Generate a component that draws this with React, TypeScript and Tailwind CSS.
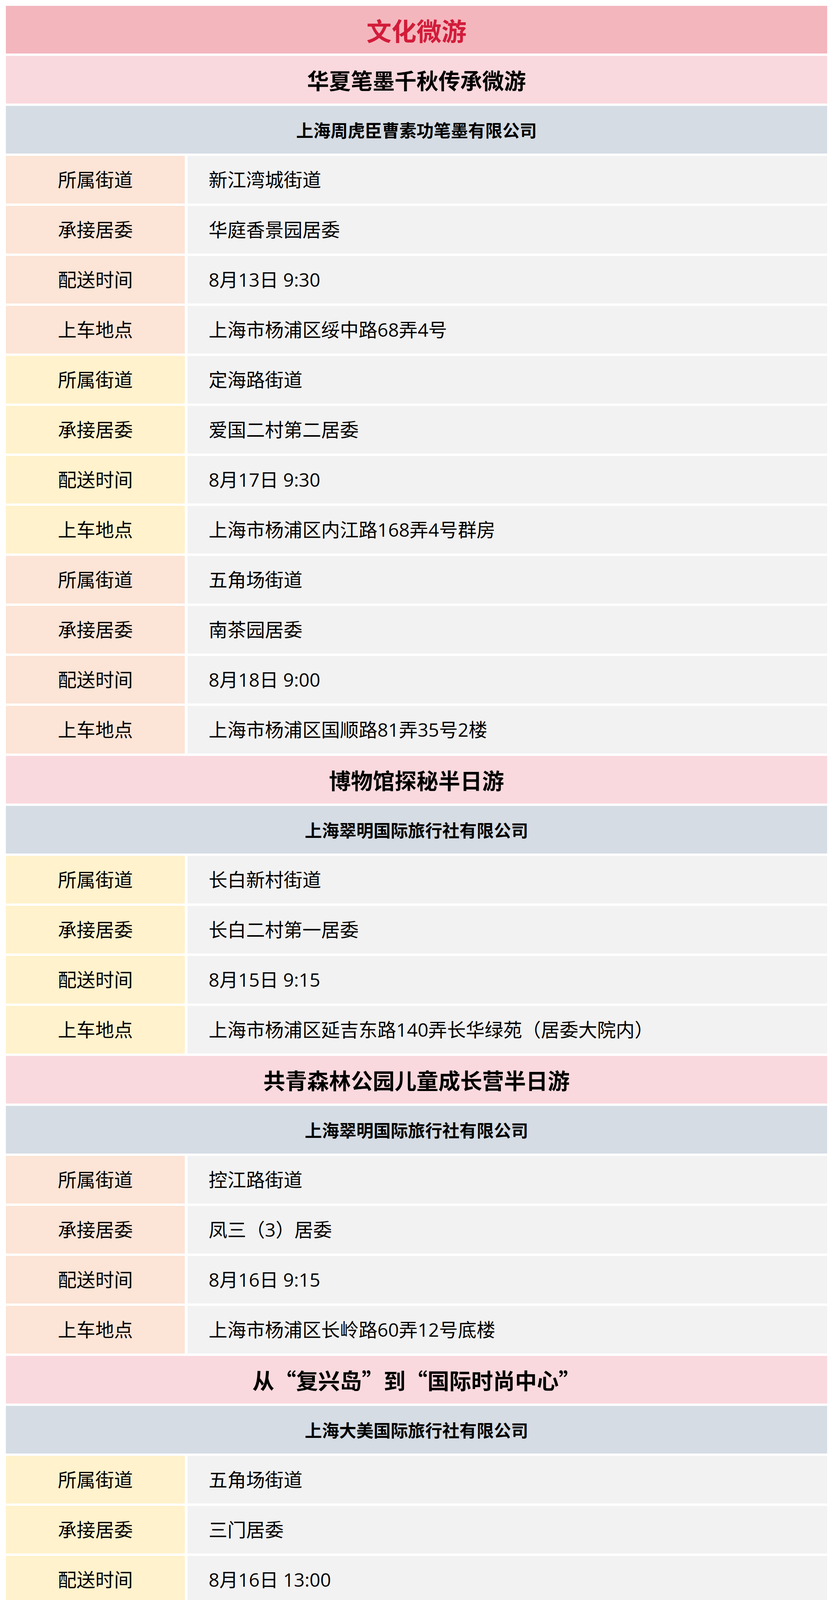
const font = "font-['Open_Sans','Noto_Sans_CJK_SC',sans-serif]";
const cjk = "font-['Noto_Sans_CJK_SC',sans-serif]";

type Row = { label: string; value: string };
type Group = { tone: "orange" | "yellow"; rows: Row[] };
type Section = { title: string; company: string; groups: Group[] };

const sections: Section[] = [
  {
    title: "华夏笔墨千秋传承微游",
    company: "上海周虎臣曹素功笔墨有限公司",
    groups: [
      {
        tone: "orange",
        rows: [
          { label: "所属街道", value: "新江湾城街道" },
          { label: "承接居委", value: "华庭香景园居委" },
          { label: "配送时间", value: "8月13日 9:30" },
          { label: "上车地点", value: "上海市杨浦区绥中路68弄4号" },
        ],
      },
      {
        tone: "yellow",
        rows: [
          { label: "所属街道", value: "定海路街道" },
          { label: "承接居委", value: "爱国二村第二居委" },
          { label: "配送时间", value: "8月17日 9:30" },
          { label: "上车地点", value: "上海市杨浦区内江路168弄4号群房" },
        ],
      },
      {
        tone: "orange",
        rows: [
          { label: "所属街道", value: "五角场街道" },
          { label: "承接居委", value: "南茶园居委" },
          { label: "配送时间", value: "8月18日 9:00" },
          { label: "上车地点", value: "上海市杨浦区国顺路81弄35号2楼" },
        ],
      },
    ],
  },
  {
    title: "博物馆探秘半日游",
    company: "上海翠明国际旅行社有限公司",
    groups: [
      {
        tone: "yellow",
        rows: [
          { label: "所属街道", value: "长白新村街道" },
          { label: "承接居委", value: "长白二村第一居委" },
          { label: "配送时间", value: "8月15日 9:15" },
          { label: "上车地点", value: "上海市杨浦区延吉东路140弄长华绿苑（居委大院内）" },
        ],
      },
    ],
  },
  {
    title: "共青森林公园儿童成长营半日游",
    company: "上海翠明国际旅行社有限公司",
    groups: [
      {
        tone: "orange",
        rows: [
          { label: "所属街道", value: "控江路街道" },
          { label: "承接居委", value: "凤三（3）居委" },
          { label: "配送时间", value: "8月16日 9:15" },
          { label: "上车地点", value: "上海市杨浦区长岭路60弄12号底楼" },
        ],
      },
    ],
  },
  {
    title: "从“复兴岛”到“国际时尚中心”",
    company: "上海大美国际旅行社有限公司",
    groups: [
      {
        tone: "yellow",
        rows: [
          { label: "所属街道", value: "五角场街道" },
          { label: "承接居委", value: "三门居委" },
          { label: "配送时间", value: "8月16日 13:00" },
          { label: "上车地点", value: "上海市杨浦区三门路358弄26号103室" },
        ],
      },
    ],
  },
];

function InfoRow({ row, tone }: { row: Row; tone: Group["tone"] }) {
  return (
    <div className="flex gap-[7px] h-[122px]">
      <div
        className={`w-[458px] shrink-0 flex items-center justify-center text-[48px] text-black ${
          tone === "orange" ? "bg-[#fce4d6]" : "bg-[#fff2cc]"
        }`}
      >
        {row.label}
      </div>
      <div className="flex-1 flex items-center pl-[54px] bg-[#f2f2f2] text-[48px] text-black">
        {row.value}
      </div>
    </div>
  );
}

export default function App() {
  return (
    <div className={`${font} bg-white w-full px-[15px] py-[15px] flex flex-col gap-[6px] leading-none`}>
      <div className={`${cjk} h-[122px] flex items-center justify-center bg-[#f4b6bd] text-[64px] font-bold text-[#d21c3a]`}>
        文化微游
      </div>
      {sections.map((section) => (
        <div key={section.title} className="flex flex-col gap-[6px]">
          <div className={`${cjk} h-[122px] flex items-center justify-center bg-[#fad9de] text-[56px] font-bold text-black`}>
            {section.title}
          </div>
          <div className={`${cjk} h-[122px] flex items-center justify-center bg-[#d5dce4] text-[44px] font-bold text-black`}>
            {section.company}
          </div>
          {section.groups.map((group, gi) =>
            group.rows.map((row) => (
              <InfoRow key={`${gi}-${row.label}`} row={row} tone={group.tone} />
            ))
          )}
        </div>
      ))}
    </div>
  );
}
